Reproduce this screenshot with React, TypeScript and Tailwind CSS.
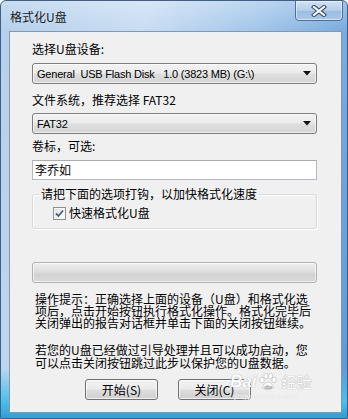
import React from "react";

const cjk = "font-['Noto_Sans_CJK_SC','Noto_Sans',sans-serif]";

function Arrow() {
  return (
    <svg width="8" height="5" viewBox="0 0 8 5" className="block">
      <path d="M0 0 H8 L4 4.5 Z" fill="#111" />
    </svg>
  );
}

function Combo({ children }: { children: React.ReactNode }) {
  return (
    <div className="h-[21px] w-full rounded-[3px] border border-[#7e7e7e] bg-[linear-gradient(to_bottom,#f3f3f3_0%,#ebebeb_45%,#dedede_55%,#d4d4d4_100%)] flex items-center pl-[4px] pr-[5px] shadow-[inset_0_0_0_1px_rgba(255,255,255,0.6)]">
      <div className="flex-1 text-[11px] leading-[14px] tracking-[-0.2px] text-black whitespace-pre font-['Liberation_Sans','Arial',sans-serif]">
        {children}
      </div>
      <Arrow />
    </div>
  );
}

function WinButton({ children }: { children: React.ReactNode }) {
  return (
    <div className="h-[21px] w-[73px] rounded-[3px] border border-[#707070] bg-[linear-gradient(to_bottom,#f2f2f2_0%,#ebebeb_48%,#dddddd_52%,#cfcfcf_100%)] shadow-[inset_0_0_0_1px_rgba(255,255,255,0.7)] flex items-center justify-center text-[12px] leading-[14px] text-black">
      {children}
    </div>
  );
}

export default function App() {
  return (
    <div
      className={`relative w-[348px] h-[419px] flex flex-col pl-[8px] pr-[5px] pb-[5px] border border-[#3f5f86] rounded-t-[6px] bg-[linear-gradient(to_bottom,rgba(255,255,255,0.28)_0%,rgba(255,255,255,0)_7%,rgba(0,0,0,0)_88%,#49bfea_96%,#2f9fd8_100%),linear-gradient(100deg,#b4cfec_0%,#c8ddf2_35%,#a3c6ea_62%,#5a97d6_100%)] overflow-hidden ${cjk}`}
    >
      {/* title bar */}
      <div className="h-[30px] flex items-start justify-between">
        <div className="pl-[1px] pt-[9px] text-[12px] leading-[14px] text-[#1b1b1b]">格式化U盘</div>
        <div className="mt-[-1px] mr-[-1px] w-[48px] h-[21px] rounded-b-[4px] border border-[#4d6f98] bg-[linear-gradient(to_bottom,#d2e3f4_0%,#b3cde9_50%,#9cbde3_55%,#a9c9ea_100%)] shadow-[inset_0_0_0_1px_rgba(255,255,255,0.5)] flex items-center justify-center">
          <svg width="16" height="12" viewBox="0 0 16 12">
            <path d="M3 2 L13 10 M13 2 L3 10" stroke="#3b4d66" strokeWidth="4.2" strokeLinecap="square" />
            <path d="M3 2 L13 10 M13 2 L3 10" stroke="#f4f7fb" strokeWidth="2.2" strokeLinecap="square" />
          </svg>
        </div>
      </div>

      {/* client area */}
      <div className="relative flex-1 flex flex-col border border-[#8497ad] bg-[#f0f0f0] pl-[22px] pr-[24px] pt-[10px] text-black">
        <div className="text-[12px] leading-[14px]">选择U盘设备:</div>
        <div className="mt-[7px]">
          <Combo>{"General  USB Flash Disk   1.0 (3823 MB) (G:\\)"}</Combo>
        </div>
        <div className="mt-[9px] text-[12px] leading-[14px]">文件系统，推荐选择 FAT32</div>
        <div className="mt-[6px]">
          <Combo>FAT32</Combo>
        </div>
        <div className="mt-[5px] text-[12px] leading-[14px]">卷标，可选:</div>
        <div className="mt-[7px] h-[20px] w-full border border-[#b3bac6] border-t-[#abadb3] bg-white flex items-center pl-[2px] text-[12px] leading-[14px]">
          李乔如
        </div>

        <fieldset className="mt-[7px] border border-[#d5d9de] rounded-[3px] pb-[8px] shadow-[1px_1px_0_#ffffff,inset_1px_1px_0_#ffffff]">
          <legend className="ml-[6px] px-[2px] text-[12px] leading-[14px]">请把下面的选项打钩，以加快格式化速度</legend>
          <div className="mt-[5px] pl-[20px] flex items-center gap-[3px]">
            <div className="w-[13px] h-[13px] border border-[#8e8f8f] bg-[linear-gradient(135deg,#dcdcdc_0%,#f4f4f4_60%,#ffffff_100%)] shadow-[inset_0_0_0_1px_#f6f6f6] flex items-center justify-center">
              <svg width="9" height="9" viewBox="0 0 9 9">
                <path d="M1 4.5 L3.5 7 L8 1.5" fill="none" stroke="#4a5f80" strokeWidth="1.8" />
              </svg>
            </div>
            <div className="text-[12px] leading-[14px]">快速格式化U盘</div>
          </div>
        </fieldset>

        <div className="mt-[33px] h-[21px] w-full rounded-[3px] border border-[#b2b2b2] bg-[linear-gradient(to_bottom,#eeeeee_0%,#dedede_45%,#d2d2d2_60%,#dadada_100%)] shadow-[inset_0_0_0_1px_rgba(255,255,255,0.6)]" />

        <div className="mt-[10px] pl-[3px] text-[12px] leading-[12px] whitespace-nowrap">
          操作提示：正确选择上面的设备（U盘）和格式化选
          <br />
          项后，点击开始按钮执行格式化操作。格式化完毕后
          <br />
          关闭弹出的报告对话框并单击下面的关闭按钮继续。
        </div>

        <div className="mt-[14px] pl-[3px] text-[12px] leading-[13px] whitespace-nowrap">
          若您的U盘已经做过引导处理并且可以成功启动，您
          <br />
          可以点击关闭按钮跳过此步以保护您的U盘数据。
        </div>

        <div className="mt-[10px] ml-[53px] flex gap-[20px]">
          <WinButton>开始(S)</WinButton>
          <WinButton>关闭(C)</WinButton>
        </div>

        {/* Baidu watermark */}
        <div className="absolute left-[220px] top-[340px] flex flex-col items-start text-white opacity-90 pointer-events-none">
          <div className="flex items-center gap-[2px] [text-shadow:0_0_1px_#a8a8a8,0_0_1px_#a8a8a8]">
            <span className="text-[17px] leading-[20px] font-bold italic font-['Liberation_Sans',sans-serif]">Bai</span>
            <svg width="19" height="18" viewBox="0 0 19 18">
              <g fill="#ffffff" stroke="#b0b0b0" strokeWidth="0.6">
                <ellipse cx="4" cy="7" rx="2.2" ry="2.8" />
                <ellipse cx="8" cy="3" rx="2.2" ry="2.8" />
                <ellipse cx="12.5" cy="3" rx="2.2" ry="2.8" />
                <ellipse cx="16" cy="7" rx="2.2" ry="2.8" />
                <path d="M4 15 Q6 9 10 9 Q14 9 15.5 15 Q10 18 4 15 Z" />
              </g>
              <text x="6.5" y="15.5" fontSize="6" fill="#b8b8b8" fontFamily="Liberation Sans, sans-serif" fontWeight="bold">du</text>
            </svg>
            <span className="ml-[2px] text-[15px] leading-[20px]">经验</span>
          </div>
          <div className="ml-[4px] text-[8px] leading-[10px] text-white [text-shadow:0_0_1px_#c0c0c0] font-['Liberation_Sans',sans-serif]">jingyan.baidu.com</div>
        </div>
      </div>
    </div>
  );
}
